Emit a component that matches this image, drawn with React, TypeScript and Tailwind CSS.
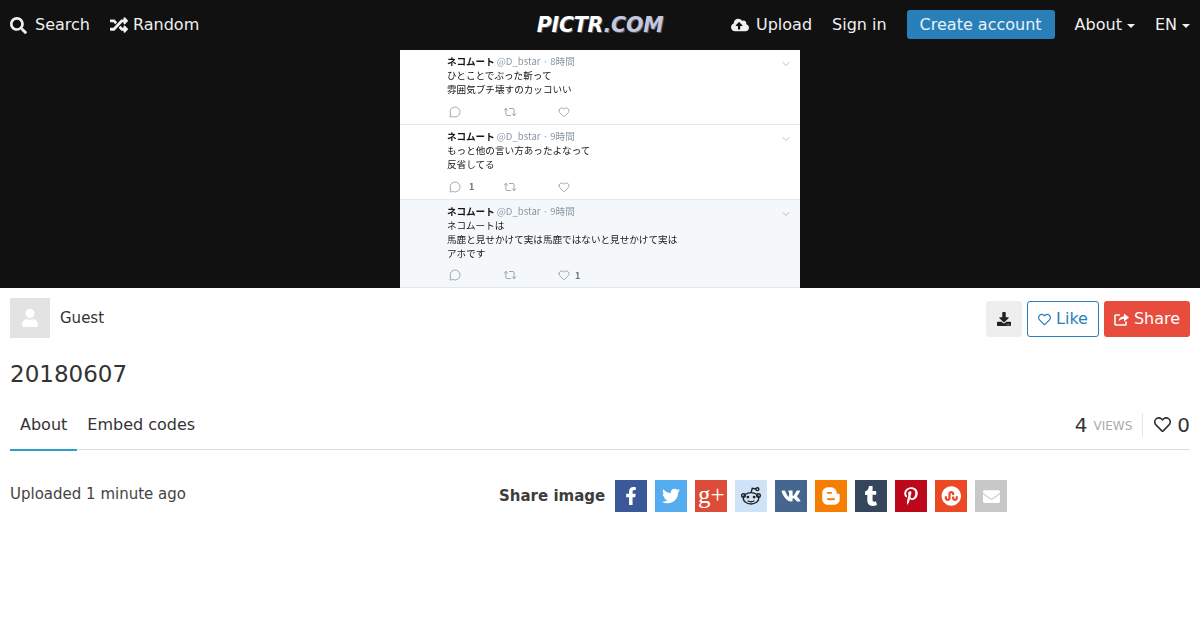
import type { ReactNode } from "react";
import {
  FaBloggerB,
  FaCloudUploadAlt,
  FaDownload,
  FaEnvelope,
  FaFacebookF,
  FaPinterestP,
  FaRandom,
  FaRegHeart,
  FaSearch,
  FaStumbleuponCircle,
  FaTumblr,
  FaTwitter,
  FaUser,
  FaVk,
} from "react-icons/fa";
import { ChevronDown, Heart, MessageCircle, Repeat2 } from "lucide-react";

function RedditIcon() {
  return (
    <svg width="22" height="22" viewBox="0 0 24 24" fill="none" stroke="currentColor" strokeWidth="1.5">
      <ellipse cx="12" cy="14.5" rx="8.5" ry="6.2" />
      <circle cx="3.8" cy="11.5" r="2" />
      <circle cx="20.2" cy="11.5" r="2" />
      <path d="M12 8.3 L13.4 3.5 L17.5 4.4" />
      <circle cx="19" cy="4.6" r="1.6" />
      <circle cx="8.6" cy="13.2" r="1.5" fill="currentColor" stroke="none" />
      <circle cx="15.4" cy="13.2" r="1.5" fill="currentColor" stroke="none" />
      <path d="M8.3 17.2 q3.7 2.2 7.4 0" />
    </svg>
  );
}

function ShareBoxIcon() {
  return (
    <svg width="15" height="14" viewBox="0 0 15 14" fill="none">
      <path d="M6 3H1.7a.7.7 0 0 0-.7.7v8.6a.7.7 0 0 0 .7.7h9.6a.7.7 0 0 0 .7-.7V9.5" stroke="currentColor" strokeWidth="1.6" />
      <path d="M4.5 9.5C4.8 6.3 7 4.4 10 4.3V1.5L15 5.5 10 9.5V6.7C8 6.7 6 7.6 4.5 9.5Z" fill="currentColor" />
    </svg>
  );
}

const SHARE = [
  { key: "fb", bg: "bg-[#3b5998]", fg: "text-white", icon: <FaFacebookF size={18} /> },
  { key: "tw", bg: "bg-[#55acee]", fg: "text-white", icon: <FaTwitter size={18} /> },
  {
    key: "gp",
    bg: "bg-[#dd4b39]",
    fg: "text-white",
    icon: <span className="pb-[4px] font-['Liberation_Serif',serif] text-[25px] leading-none">g+</span>,
  },
  { key: "rd", bg: "bg-[#cee3f8]", fg: "text-[#222222]", icon: <RedditIcon /> },
  { key: "vk", bg: "bg-[#45668e]", fg: "text-white", icon: <FaVk size={20} /> },
  { key: "bl", bg: "bg-[#f57d00]", fg: "text-white", icon: <FaBloggerB size={20} /> },
  { key: "tb", bg: "bg-[#35465c]", fg: "text-white", icon: <FaTumblr size={20} /> },
  { key: "pn", bg: "bg-[#bd081c]", fg: "text-white", icon: <FaPinterestP size={18} /> },
  { key: "su", bg: "bg-[#eb4924]", fg: "text-white", icon: <FaStumbleuponCircle size={20} /> },
  { key: "ml", bg: "bg-[#c8c8c8]", fg: "text-white", icon: <FaEnvelope size={17} /> },
];

function NavLink({ icon, gap, children }: { icon?: ReactNode; gap: string; children: ReactNode }) {
  return (
    <a className={`flex items-center text-[16px] text-[#f0f0f0] ${gap}`}>
      {icon}
      {children}
    </a>
  );
}

function Caret() {
  return <span className="ml-[5px] mt-[2px] h-0 w-0 border-x-[4px] border-t-[4px] border-x-transparent border-t-[#f0f0f0]" />;
}

function Tweet({
  time,
  lines,
  reply,
  like,
  className,
}: {
  time: string;
  lines: string[];
  reply?: string;
  like?: string;
  className: string;
}) {
  return (
    <div className={`relative border-b border-[#e1e8ed] pl-[47px] pt-[4px] ${className}`}>
      <ChevronDown size={12} strokeWidth={1.2} className="absolute right-[8px] top-[8px] text-[#8899a6]" />
      <div className="flex h-[15px] items-center gap-[2px] text-[9.6px]">
        <span className="font-bold text-[#14171a]">ネコムート</span>
        <span className="text-[#8a98a5]">@D_bstar · {time}</span>
      </div>
      <div className="text-[9.6px] leading-[13.8px] text-[#14171a]">
        {lines.map((line) => (
          <div key={line}>{line}</div>
        ))}
      </div>
      <div className="mt-[9px] flex h-[12px] items-center text-[#657786]">
        <div className="flex w-[55px] items-center gap-[8px] pl-[2px] text-[9px] font-bold">
          <MessageCircle size={12} strokeWidth={1.2} />
          {reply}
        </div>
        <div className="w-[56px] pl-[1px]">
          <Repeat2 size={14} strokeWidth={1.1} />
        </div>
        <div className="flex items-center gap-[5px] text-[9px] font-bold">
          <Heart size={12} strokeWidth={1.2} />
          {like}
        </div>
      </div>
    </div>
  );
}

export default function App() {
  return (
    <div className="h-[630px] w-[1200px] overflow-hidden bg-white font-['DejaVu_Sans',sans-serif] text-[#333333]">
      <header className="flex h-[50px] items-center bg-[#111111] px-[10px]">
        <nav className="flex flex-1 items-center gap-[20px]">
          <NavLink gap="gap-[8px]" icon={<FaSearch size={17} />}>
            Search
          </NavLink>
          <NavLink gap="gap-[5px]" icon={<FaRandom size={18} />}>
            Random
          </NavLink>
        </nav>
        <a className="font-['DejaVu_Sans',sans-serif] text-[20.5px] font-bold italic tracking-[-0.2px] text-white [text-shadow:1px_1px_0_#555555]">
          PICTR<span className="text-[#c3c8e0]">.COM</span>
        </a>
        <nav className="flex flex-1 items-center justify-end gap-[20px]">
          <NavLink gap="gap-[7px]" icon={<FaCloudUploadAlt size={18} />}>
            Upload
          </NavLink>
          <NavLink gap="gap-0">Sign in</NavLink>
          <a className="mb-[2px] flex h-[29px] w-[148px] items-center justify-center rounded-[3px] bg-[#2980b9] pt-[1px] text-[16px] text-[#e8f2f8]">
            Create account
          </a>
          <NavLink gap="gap-0">
            About
            <Caret />
          </NavLink>
          <NavLink gap="gap-0">
            EN
            <Caret />
          </NavLink>
        </nav>
      </header>

      <div className="flex h-[238px] justify-center bg-[#111111]">
        <div className="h-[238px] w-[400px] overflow-hidden bg-white font-['Noto_Sans_CJK_JP',sans-serif] [filter:blur(0.3px)]">
          <Tweet
            className="h-[75px] bg-white"
            time="8時間"
            lines={["ひとことでぶった斬って", "雰囲気ブチ壊すのカッコいい"]}
          />
          <Tweet
            className="h-[75px] bg-white"
            time="9時間"
            lines={["もっと他の言い方あったよなって", "反省してる"]}
            reply="1"
          />
          <Tweet
            className="h-[88px] bg-[#f5f8fa]"
            time="9時間"
            lines={["ネコムートは", "馬鹿と見せかけて実は馬鹿ではないと見せかけて実は", "アホです"]}
            like="1"
          />
        </div>
      </div>

      <main className="px-[10px]">
        <div className="flex justify-between pt-[10px]">
          <div className="flex items-start gap-[10px]">
            <div className="flex h-[40px] w-[40px] items-center justify-center bg-[#e3e3e3] text-white">
              <FaUser size={18} />
            </div>
            <span className="mt-[10px] text-[15px] leading-[20px]">Guest</span>
          </div>
          <div className="flex gap-[5px] pt-[3px]">
            <button className="flex h-[36px] w-[36px] items-center justify-center rounded-[3px] bg-[#eeeeee] text-[#222222]">
              <FaDownload size={14} />
            </button>
            <button className="flex h-[36px] w-[72px] items-center justify-center gap-[5px] rounded-[3px] border border-[#2980b9] text-[16px] text-[#2980b9]">
              <FaRegHeart size={13} /> Like
            </button>
            <button className="flex h-[36px] w-[86px] items-center justify-center gap-[5px] rounded-[3px] bg-[#e74c3c] text-[16px] text-white">
              <ShareBoxIcon /> Share
            </button>
          </div>
        </div>

        <h1 className="mt-[22px] text-[23px] leading-[28px]">20180607</h1>

        <div className="mt-[18px] flex h-[44px] items-center justify-between border-b border-[#dddddd]">
          <div className="flex h-[44px]">
            <a className="flex h-[45px] items-center border-b-2 border-[#2a9fc9] px-[10px] pb-[5px] text-[16px]">
              About
            </a>
            <a className="flex h-[44px] items-center px-[10px] pb-[6px] text-[16px]">Embed codes</a>
          </div>
          <div className="flex items-center pb-[6px]">
            <span className="text-[20px] leading-[24px]">4</span>
            <span className="ml-[6px] pt-[3px] text-[12px] text-[#aaaaaa]">VIEWS</span>
            <span className="ml-[10px] mr-[11px] h-[24px] w-px bg-[#e5e5e5]" />
            <FaRegHeart size={17} />
            <span className="ml-[6px] text-[20px] leading-[24px]">0</span>
          </div>
        </div>

        <div className="mt-[18px] flex items-start">
          <div className="mt-[16px] w-[489px] text-[15px] leading-[20px] text-[#444444]">
            Uploaded 1 minute ago
          </div>
          <div className="mt-[12px] flex items-center gap-[8px]">
            <b className="mr-[2px] text-[15px] text-[#3d3d3d]">Share image</b>
            {SHARE.map((s) => (
              <a key={s.key} className={`flex h-[32px] w-[32px] items-center justify-center ${s.bg} ${s.fg}`}>
                {s.icon}
              </a>
            ))}
          </div>
        </div>
      </main>
    </div>
  );
}
